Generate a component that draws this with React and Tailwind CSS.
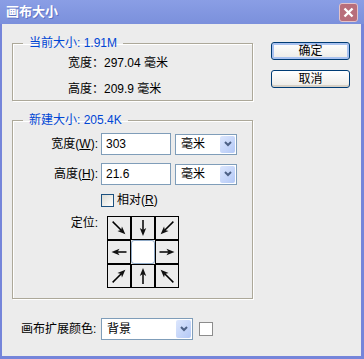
import React from "react";

const font = "font-['Liberation_Sans','Noto_Sans_CJK_SC',sans-serif]";

// angle: 0 = right, 90 = down
function Arrow({ angle, len }) {
  const h = len / 2;
  const tip = 11 + h;
  return (
    <svg width="22" height="22" viewBox="0 0 22 22">
      <g transform={`rotate(${angle} 11 11)`}>
        <line x1={11 - h} y1="11" x2={tip - 4} y2="11" stroke="#000" strokeWidth="1.5" />
        <polygon points={`${tip},11 ${tip - 8},7.8 ${tip - 6},11 ${tip - 8},14.2`} fill="#111" />
      </g>
    </svg>
  );
}

function Chevron() {
  return (
    <svg width="8" height="6" viewBox="0 0 8 6">
      <path d="M1 1 L4 4 L7 1" fill="none" stroke="#4d6185" strokeWidth="2" />
    </svg>
  );
}

function Select({ value, width }) {
  return (
    <div className={`flex h-[21px] items-stretch justify-between border border-[#7f9db9] bg-white py-[1px] pr-[1px] ${width}`}>
      <span className="self-center pl-[5px] text-[12px] leading-[14px] text-black">{value}</span>
      <div className="flex w-[15px] items-center justify-center rounded-[2px] bg-linear-to-br from-[#dde7fd] to-[#b3c8f6]">
        <Chevron />
      </div>
    </div>
  );
}

function Group({ title, children }) {
  return (
    <fieldset className="w-[241px] border border-[#aca899] shadow-[inset_1px_1px_0_#fff,1px_1px_0_#fff]">
      <legend className="ml-[10px] px-[6px] text-[12px] leading-[14px] text-[#0046d5]">{title}</legend>
      {children}
    </fieldset>
  );
}

const cells = [
  { a: 45, l: 18 },
  { a: 90, l: 16 },
  { a: 135, l: 18 },
  { a: 180, l: 15 },
  null,
  { a: 0, l: 15 },
  { a: -45, l: 18 },
  { a: -90, l: 16 },
  { a: -135, l: 18 },
];

export default function App() {
  return (
    <div className={`flex h-[359px] w-[364px] flex-col bg-[#ececec] text-black ${font}`}>
      {/* title bar */}
      <div className="flex h-[24px] items-center justify-between bg-linear-to-b from-[#8a9ee5] to-[#7b90dc] pl-[6px] pr-[6px]">
        <span className="text-[13px] font-bold leading-[16px] text-white [text-shadow:1px_1px_0_#6073c4]">画布大小</span>
        <div className="flex h-[19px] w-[19px] items-center justify-center rounded-[3px] border border-[#e3c3c9] bg-[#b86e7b]">
          <svg width="11" height="11" viewBox="0 0 11 11">
            <path d="M1.5 1.5 L9.5 9.5 M9.5 1.5 L1.5 9.5" stroke="#fff" strokeWidth="2.4" />
          </svg>
        </div>
      </div>

      <div className="flex flex-1 border-b-[3px] border-l-2 border-r-[3px] border-[#7585da]">
        {/* left column */}
        <div className="flex flex-col pl-[10px] pt-[12px]">
          <Group title="当前大小: 1.91M">
            <div className="flex flex-col gap-[12px] pb-[4px] pl-[55px] pt-[6px] text-[12px] leading-[14px]">
              <div>宽度：297.04 毫米</div>
              <div>高度：209.9 毫米</div>
            </div>
          </Group>

          <div className="mt-[12px]">
            <Group title="新建大小: 205.4K">
              <div className="flex flex-col pb-[10px] pt-[6px] text-[12px] leading-[14px]">
                <div className="flex items-center">
                  <span className="w-[85px] text-right">宽度(<u>W</u>):</span>
                  <input
                    readOnly
                    value="303"
                    className="ml-[3px] h-[22px] w-[70px] border border-[#7f9db9] bg-white px-[4px] text-[12px] outline-none"
                  />
                  <div className="ml-[4px]">
                    <Select value="毫米" width="w-[62px]" />
                  </div>
                </div>
                <div className="mt-[8px] flex items-center">
                  <span className="w-[85px] text-right">高度(<u>H</u>):</span>
                  <input
                    readOnly
                    value="21.6"
                    className="ml-[3px] h-[22px] w-[70px] border border-[#7f9db9] bg-white px-[4px] text-[12px] outline-none"
                  />
                  <div className="ml-[4px]">
                    <Select value="毫米" width="w-[62px]" />
                  </div>
                </div>
                <div className="mt-[8px] flex items-center pl-[88px]">
                  <div className="h-[13px] w-[13px] border border-[#1c5180] bg-linear-to-br from-[#dcdcd5] to-white" />
                  <span className="ml-[3px]">相对(<u>R</u>)</span>
                </div>
                <div className="mt-[9px] flex items-start">
                  <span className="w-[85px] text-right">定位:</span>
                  <div className="ml-[9px] grid grid-cols-[repeat(3,24px)] grid-rows-[repeat(3,24px)]">
                    {cells.map((c, i) =>
                      c ? (
                        <div key={i} className="flex items-center justify-center border border-black bg-[#ececec]">
                          <Arrow angle={c.a} len={c.l} />
                        </div>
                      ) : (
                        <div key={i} className="rounded-[3px] border border-[#8fa9c6] bg-white" />
                      )
                    )}
                  </div>
                </div>
              </div>
            </Group>
          </div>

          <div className="ml-[9px] mt-[19px] flex items-center text-[12px] leading-[14px]">
            <span className="w-[80px]">画布扩展颜色:</span>
            <div className="h-[22px]">
              <Select value="背景" width="h-[22px] w-[92px]" />
            </div>
            <div className="ml-[6px] h-[14px] w-[14px] border border-[#8c8c8c] bg-white" />
          </div>
        </div>

        {/* right column */}
        <div className="flex flex-col gap-[10px] pl-[18px] pt-[18px]">
          <button className="h-[18px] w-[79px] rounded-[3px] border border-[#003c74] bg-linear-to-b from-white to-[#ecebe6] text-[12px] leading-[14px] shadow-[inset_0_0_0_2px_#a9c2f0]">
            确定
          </button>
          <button className="h-[18px] w-[79px] rounded-[3px] border border-[#003c74] bg-linear-to-b from-white to-[#ecebe6] text-[12px] leading-[14px] shadow-[inset_0_-2px_0_#d6d0c5]">
            取消
          </button>
        </div>
      </div>
    </div>
  );
}
